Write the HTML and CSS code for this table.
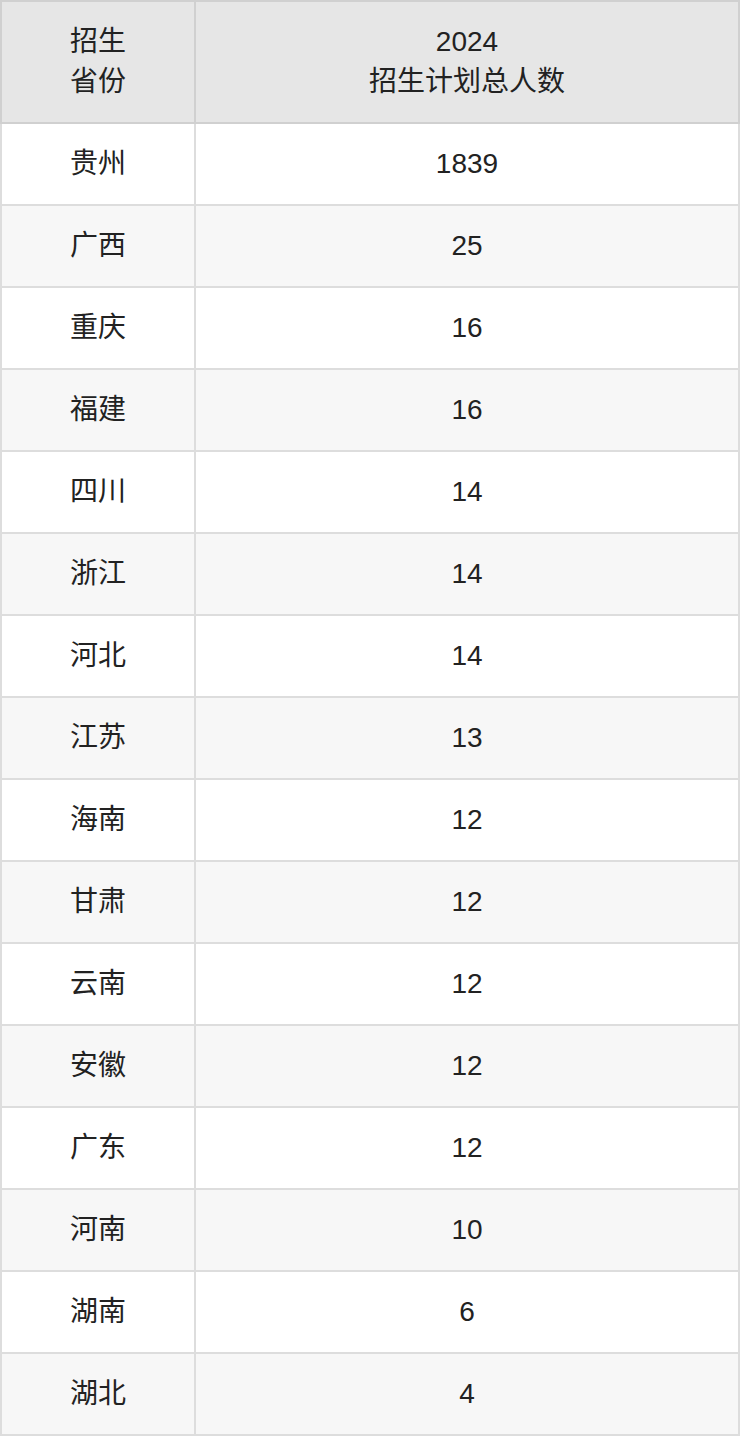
FILE: index.html
```html
<!DOCTYPE html>
<html lang="zh-CN">
<head>
<meta charset="utf-8">
<link rel="stylesheet" href="styles.css">
</head>
<body>
<table class="plan">
  <thead>
    <tr><th class="prov">招生<br>省份</th><th class="num">2024<br>招生计划总人数</th></tr>
  </thead>
  <tbody>
    <tr><td>贵州</td><td>1839</td></tr>
    <tr><td>广西</td><td>25</td></tr>
    <tr><td>重庆</td><td>16</td></tr>
    <tr><td>福建</td><td>16</td></tr>
    <tr><td>四川</td><td>14</td></tr>
    <tr><td>浙江</td><td>14</td></tr>
    <tr><td>河北</td><td>14</td></tr>
    <tr><td>江苏</td><td>13</td></tr>
    <tr><td>海南</td><td>12</td></tr>
    <tr><td>甘肃</td><td>12</td></tr>
    <tr><td>云南</td><td>12</td></tr>
    <tr><td>安徽</td><td>12</td></tr>
    <tr><td>广东</td><td>12</td></tr>
    <tr><td>河南</td><td>10</td></tr>
    <tr><td>湖南</td><td>6</td></tr>
    <tr><td>湖北</td><td>4</td></tr>
  </tbody>
</table>
</body>
</html>
```
FILE: styles.css
```css
html, body {
  margin: 0;
  padding: 0;
  background: #ffffff;
}
body {
  font-family: "Liberation Sans", "Noto Sans CJK SC", sans-serif;
  font-size: 28px;
  line-height: 40px;
  color: #222222;
}
.plan {
  width: 740px;
  border-collapse: collapse;
  table-layout: fixed;
}
.plan th, .plan td {
  text-align: center;
  font-weight: normal;
  padding: 20px 0;
  border: 2px solid #dddddd;
}
.plan th {
  background: #e6e6e6;
  border-color: #d0d0d0;
}
.plan .prov {
  width: 192px;
}
.plan tbody tr:nth-child(odd) td {
  background: #ffffff;
}
.plan tbody tr:nth-child(even) td {
  background: #f7f7f7;
}
```
